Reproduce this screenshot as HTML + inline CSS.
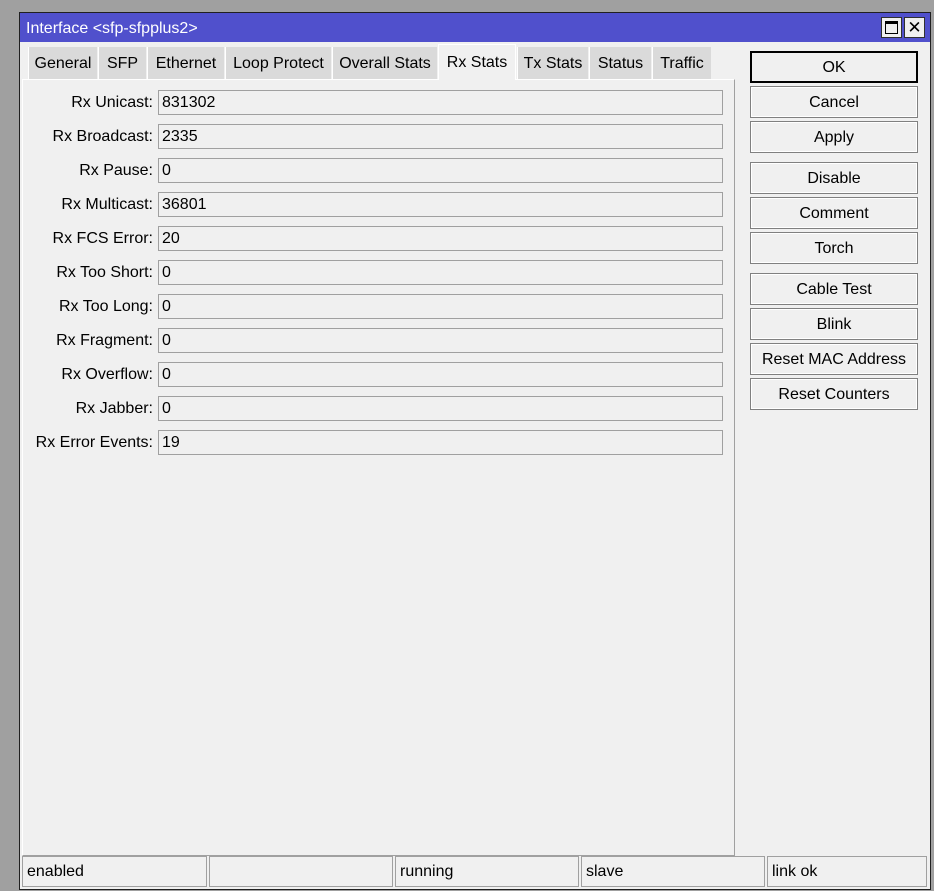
<!DOCTYPE html>
<html><head><style>
*{box-sizing:border-box;margin:0;padding:0}
body{width:934px;height:891px;background:#a0a0a0;position:relative;overflow:hidden;font-family:"Liberation Sans",sans-serif;font-size:16px;color:#000}
.win{position:absolute;left:19px;top:12px;width:912px;height:878px;background:#f0f0f0;border:1px solid #202020}
.title{position:absolute;left:0;top:0;width:910px;height:29px;background:#5050cc;color:#fff;font-size:16px;line-height:31px;padding-left:6px}
.tb{position:absolute;top:4px;width:21px;height:21px;background:#f0f0f0;border:1px solid #303030}
.a{position:absolute}
.tab{position:absolute;top:34px;height:32px;background:#dadada;border-left:1px solid #fff;line-height:34px;text-align:center}
.tab.act{top:31px;height:36px;background:#f0f0f0;line-height:36px;border:1px solid #fff;border-bottom:none;z-index:2}
.panel{position:absolute;left:2px;top:66px;width:713px;height:777px;border:1px solid #a0a0a0;border-top:1px solid #fff;border-left:1px solid #fff}
.lbl{position:absolute;left:0;width:133px;text-align:right;height:25px;line-height:26px}
.fld{position:absolute;left:138px;width:565px;height:25px;border:1px solid #a0a0a0;line-height:24px;padding-left:3px;background:#f0f0f0}
.btn{position:absolute;left:730px;width:168px;height:32px;border:1px solid #808080;box-shadow:inset 0 0 0 1px #fff;text-align:center;line-height:31px}
.st{position:absolute;top:843px;height:31px;border:1px solid #a0a0a0;line-height:30px;padding-left:4px}
</style></head><body>
<div class="win">
<div class="title">Interface &lt;sfp-sfpplus2&gt;</div>
<div class="tb" style="left:861px"><div style="position:absolute;left:3px;top:3px;width:13px;height:13px;border:1px solid #000;border-top-width:3px"></div></div>
<div class="tb" style="left:884px;font-size:17px;line-height:19px;text-align:center">✕</div>

<div class="tab" style="left:8px;width:69px">General</div>
<div class="tab" style="left:78px;width:48px">SFP</div>
<div class="tab" style="left:127px;width:77px">Ethernet</div>
<div class="tab" style="left:205px;width:106px">Loop Protect</div>
<div class="tab" style="left:312px;width:105px">Overall Stats</div>
<div class="tab act" style="left:418px;width:78px">Rx Stats</div>
<div class="tab" style="left:497px;width:71px">Tx Stats</div>
<div class="tab" style="left:569px;width:62px">Status</div>
<div class="tab" style="left:632px;width:59px">Traffic</div>

<div class="panel"></div>
<div class="a" style="left:0;top:0">
<div class="lbl" style="top:77px">Rx Unicast:</div><div class="fld" style="top:77px">831302</div>
<div class="lbl" style="top:111px">Rx Broadcast:</div><div class="fld" style="top:111px">2335</div>
<div class="lbl" style="top:145px">Rx Pause:</div><div class="fld" style="top:145px">0</div>
<div class="lbl" style="top:179px">Rx Multicast:</div><div class="fld" style="top:179px">36801</div>
<div class="lbl" style="top:213px">Rx FCS Error:</div><div class="fld" style="top:213px">20</div>
<div class="lbl" style="top:247px">Rx Too Short:</div><div class="fld" style="top:247px">0</div>
<div class="lbl" style="top:281px">Rx Too Long:</div><div class="fld" style="top:281px">0</div>
<div class="lbl" style="top:315px">Rx Fragment:</div><div class="fld" style="top:315px">0</div>
<div class="lbl" style="top:349px">Rx Overflow:</div><div class="fld" style="top:349px">0</div>
<div class="lbl" style="top:383px">Rx Jabber:</div><div class="fld" style="top:383px">0</div>
<div class="lbl" style="top:417px">Rx Error Events:</div><div class="fld" style="top:417px">19</div>
</div>

<div class="btn" style="top:38px;border:2px solid #000;box-shadow:none;line-height:29px">OK</div>
<div class="btn" style="top:73px">Cancel</div>
<div class="btn" style="top:108px">Apply</div>
<div class="btn" style="top:149px">Disable</div>
<div class="btn" style="top:184px">Comment</div>
<div class="btn" style="top:219px">Torch</div>
<div class="btn" style="top:260px">Cable Test</div>
<div class="btn" style="top:295px">Blink</div>
<div class="btn" style="top:330px">Reset MAC Address</div>
<div class="btn" style="top:365px">Reset Counters</div>

<div class="st" style="left:2px;width:185px">enabled</div>
<div class="st" style="left:189px;width:184px"></div>
<div class="st" style="left:375px;width:184px">running</div>
<div class="st" style="left:561px;width:184px">slave</div>
<div class="st" style="left:747px;width:160px">link ok</div>
</div>
</body></html>
